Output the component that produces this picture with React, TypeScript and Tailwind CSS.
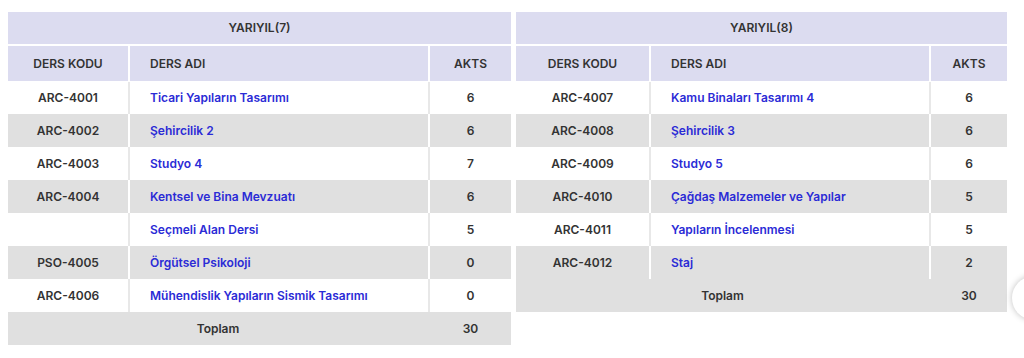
import React from "react";

type Course = { code: string; name: string; akts: number };

const sem7: Course[] = [
  { code: "ARC-4001", name: "Ticari Yapıların Tasarımı", akts: 6 },
  { code: "ARC-4002", name: "Şehircilik 2", akts: 6 },
  { code: "ARC-4003", name: "Studyo 4", akts: 7 },
  { code: "ARC-4004", name: "Kentsel ve Bina Mevzuatı", akts: 6 },
  { code: "", name: "Seçmeli Alan Dersi", akts: 5 },
  { code: "PSO-4005", name: "Örgütsel Psikoloji", akts: 0 },
  { code: "ARC-4006", name: "Mühendislik Yapıların Sismik Tasarımı", akts: 0 },
];

const sem8: Course[] = [
  { code: "ARC-4007", name: "Kamu Binaları Tasarımı 4", akts: 6 },
  { code: "ARC-4008", name: "Şehircilik 3", akts: 6 },
  { code: "ARC-4009", name: "Studyo 5", akts: 6 },
  { code: "ARC-4010", name: "Çağdaş Malzemeler ve Yapılar", akts: 5 },
  { code: "ARC-4011", name: "Yapıların İncelenmesi", akts: 5 },
  { code: "ARC-4012", name: "Staj", akts: 2 },
];

// one semester table
function Semester({
  title,
  courses,
  total,
  cols,
}: {
  title: string;
  courses: Course[];
  total: number;
  cols: [string, string, string];
}) {
  return (
    <table className="border-collapse text-[12px] font-semibold text-[#333]">
      <colgroup>
        <col className={cols[0]} />
        <col className={cols[1]} />
        <col className={cols[2]} />
      </colgroup>
      <thead>
        {/* Semester title */}
        <tr className="bg-[#dcdcf0]">
          <th colSpan={3} className="h-[33px] border-b-2 border-white text-center font-semibold">
            {title}
          </th>
        </tr>
        <tr className="bg-[#dcdcf0]">
          <th className="h-[36px] border-b border-white pt-[1px] text-center font-semibold">DERS KODU</th>
          <th className="h-[36px] border-x-2 border-b border-white pl-5 pt-[1px] text-left font-semibold">DERS ADI</th>
          <th className="h-[36px] border-b border-white pt-[1px] text-center font-semibold">AKTS</th>
        </tr>
      </thead>
      <tbody>
        {courses.map((c, i) => {
          const gray = i % 2 === 1;
          return (
            <tr key={c.name} className={gray ? "bg-[#e0e0e0]" : "bg-white"}>
              <td className="h-[33px] text-center">{c.code}</td>
              <td
                className={
                  gray
                    ? "h-[33px] border-x-2 border-white pl-5 text-[#2b2bd6]"
                    : "h-[33px] border-x-2 border-[#e8e8e8] pl-5 text-[#2b2bd6]"
                }
              >
                {c.name}
              </td>
              <td className="h-[33px] text-center">{c.akts}</td>
            </tr>
          );
        })}
        {/* Total */}
        <tr className="bg-[#e0e0e0]">
          <td colSpan={2} className="h-[33px] border-r-2 border-[#e0e0e0] text-center">
            Toplam
          </td>
          <td className="h-[33px] text-center">{total}</td>
        </tr>
      </tbody>
    </table>
  );
}

export default function App() {
  return (
    <main
      className="relative h-[358px] w-[1024px] overflow-hidden bg-white"
      style={{ fontFamily: "Inter, 'Noto Sans', sans-serif" }}
    >
      <div className="flex items-start gap-[5px] pl-[8px] pt-[12px]">
        <Semester
          title="YARIYIL(7)"
          courses={sem7}
          total={30}
          cols={["w-[121px]", "w-[300px]", "w-[82px]"]}
        />
        <Semester
          title="YARIYIL(8)"
          courses={sem8}
          total={30}
          cols={["w-[134px]", "w-[280px]", "w-[77px]"]}
        />
      </div>

      {/* Scroll-to-top button peeking in */}
      <div className="absolute left-[1012px] top-[276px] h-[44px] w-[44px] rounded-full bg-white shadow-[0_0_6px_rgba(0,0,0,0.25)]" />
    </main>
  );
}
